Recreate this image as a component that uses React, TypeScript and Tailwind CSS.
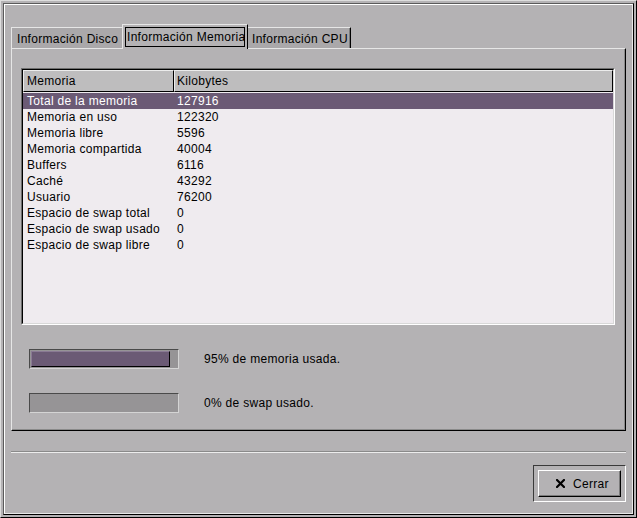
import React from "react";

const rows: [string, string][] = [
  ["Total de la memoria", "127916"],
  ["Memoria en uso", "122320"],
  ["Memoria libre", "5596"],
  ["Memoria compartida", "40004"],
  ["Buffers", "6116"],
  ["Caché", "43292"],
  ["Usuario", "76200"],
  ["Espacio de swap total", "0"],
  ["Espacio de swap usado", "0"],
  ["Espacio de swap libre", "0"],
];

function Bar({ pct, label }: { pct: number; label: string }) {
  return (
    <div className="flex items-center h-[20px]">
      <div className="ml-[8px] w-[150px] h-[20px] border border-t-[#4a4a4a] border-l-[#4a4a4a] border-r-[#d4d4d4] border-b-[#d4d4d4] bg-[#969496] flex p-px">
        {pct > 0 && (
          <div
            className="h-full bg-[#6b5a75] border border-t-[#8a7a94] border-l-[#8a7a94] border-r-black border-b-black"
            style={{ width: `${pct}%` }}
          />
        )}
      </div>
      <span className="ml-[25px]">{label}</span>
    </div>
  );
}

export default function App() {
  return (
    <div className="w-[637px] h-[518px] bg-[#b4b2b4] text-[12px] leading-[16px] tracking-[0.3px] text-black font-['Liberation_Sans',Arial,sans-serif] border border-t-[#dedede] border-l-[#dedede] border-r-black border-b-black p-[2px]">
      <div className="h-full border border-t-[#5a5a5a] border-l-[#5a5a5a] border-r-black border-b-black">
        <div className="h-full border border-t-white border-l-white border-r-[#e8e8e8] border-b-[#e8e8e8] flex flex-col pt-[19px] px-[6px]">
          {/* tabs */}
          <div className="flex items-end h-[24px]">
            <div className="w-[111px] h-[21px] bg-[#aaa8aa] border-l border-t border-l-[#e6e6e6] border-t-[#e6e6e6] flex items-center pl-[5px] pt-[1px]">
              Información Disco
            </div>
            <div className="relative z-10 w-[126px] h-[25px] -mb-px bg-[#b4b2b4] border-l border-t border-r border-l-[#e6e6e6] border-t-[#e6e6e6] border-r-black flex pt-[2px] pl-[2px]">
              <div className="w-[120px] h-[20px] border border-black flex items-center pl-[1px] whitespace-nowrap overflow-hidden">
                Información Memoria
              </div>
            </div>
            <div className="w-[103px] h-[21px] bg-[#aaa8aa] border-t border-r border-t-[#e6e6e6] border-r-black flex items-center pl-[4px] pt-[1px] shadow-[inset_-1px_0_0_#7a7a7a]">
              Información CPU
            </div>
          </div>
          {/* panel */}
          <div className="h-[383px] border border-t-[#e6e6e6] border-l-[#e6e6e6] border-r-black border-b-black shadow-[inset_-1px_-1px_0_#8a8a8a] flex flex-col pt-[19px] pl-[9px] pr-[10px]">
            <div className="h-[257px] border border-t-[#6e6e6e] border-l-[#6e6e6e] border-r-white border-b-white">
              <div className="h-full border border-t-black border-l-black border-r-[#d8d8d8] border-b-[#d8d8d8] bg-[#efebef] flex flex-col">
                <div className="flex h-[22px] bg-[#bebdbe]">
                  <div className="w-[151px] border border-t-[#ececec] border-l-[#ececec] border-r-black border-b-black flex items-center pl-[3px]">
                    Memoria
                  </div>
                  <div className="flex-1 border border-t-[#ececec] border-l-[#ececec] border-r-black border-b-black flex items-center pl-[2px]">
                    Kilobytes
                  </div>
                </div>
                <div className="pt-px">
                  {rows.map(([k, v], i) => (
                    <div
                      key={k}
                      className={`flex h-[16px] items-center ${i === 0 ? "bg-[#6b5a75] text-white" : ""}`}
                    >
                      <div className="w-[151px] pl-[4px] whitespace-nowrap">{k}</div>
                      <div className="pl-[3px]">{v}</div>
                    </div>
                  ))}
                </div>
              </div>
            </div>
            <div className="mt-[24px]">
              <Bar pct={95} label="95% de memoria usada." />
            </div>
            <div className="mt-[24px]">
              <Bar pct={0} label="0% de swap usado." />
            </div>
          </div>
          {/* separator */}
          <div className="mt-[20px] h-[2px] border-t border-b border-t-[#8a8a8a] border-b-[#ececec]" />
          {/* button */}
          <div className="mt-[12px] flex justify-end">
            <div className="w-[93px] h-[37px] border border-t-[#3a3a3a] border-l-[#3a3a3a] border-r-white border-b-white p-[4px]">
              <div className="h-full bg-[#b4b2b4] border border-t-white border-l-white border-r-black border-b-black shadow-[inset_-1px_-1px_0_#7a7a7a] flex items-center pl-[17px]">
                <svg width="9" height="9" viewBox="0 0 9 9" className="mr-[8px]">
                  <path d="M1 1 L8 8 M8 1 L1 8" stroke="black" strokeWidth="2.2" strokeLinecap="square" />
                </svg>
                <span>Cerrar</span>
              </div>
            </div>
          </div>
        </div>
      </div>
    </div>
  );
}
